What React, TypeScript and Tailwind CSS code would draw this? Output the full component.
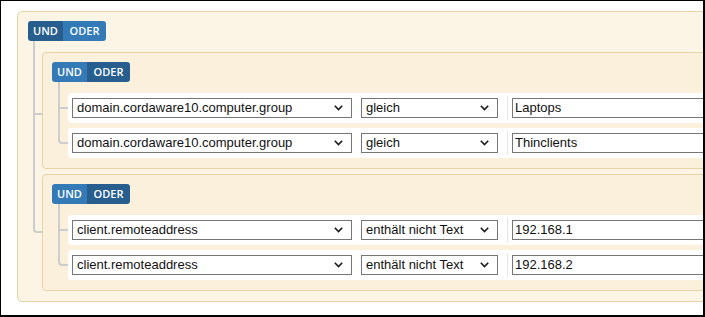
import type { ReactNode } from "react";

type Mode = "und" | "oder";

function Toggle({ active }: { active: Mode }) {
  return (
    <div className="flex h-[20px] w-fit overflow-hidden rounded-[3px] font-['Open_Sans',sans-serif] text-[11px] font-semibold text-white">
      <span
        className={`flex w-[35px] items-center justify-center ${
          active === "und" ? "bg-[#275e8e]" : "bg-[#337ab7]"
        }`}
      >
        UND
      </span>
      <span
        className={`flex items-center justify-center ${
          active === "oder" ? "bg-[#275e8e]" : "bg-[#337ab7]"
        } w-[43px]`}
      >
        ODER
      </span>
    </div>
  );
}

/** One child of a group, with its connector drawn on the left. */
function Branch({
  last,
  className,
  branch,
  children,
}: {
  last?: boolean;
  className: string;
  branch: string;
  children: ReactNode;
}) {
  return (
    <div className={`relative ${className}`}>
      {last ? (
        <div
          className={`absolute left-0 top-0 rounded-bl-[4px] border-b-2 border-l-2 border-[#cdcdcd] ${branch}`}
        />
      ) : (
        <>
          <div className="absolute bottom-0 left-0 top-0 w-[2px] bg-[#cdcdcd]" />
          <div className={`absolute left-0 h-[2px] bg-[#cdcdcd] ${branch}`} />
        </>
      )}
      {children}
    </div>
  );
}

function Select({ value, width }: { value: string; width: string }) {
  return (
    <div
      className={`flex h-[20px] shrink-0 items-center justify-between border border-[#767676] bg-white pl-[4px] pr-[8px] ${width}`}
    >
      <span>{value}</span>
      <svg width="9" height="6" viewBox="0 0 9 6" className="shrink-0">
        <polyline
          points="0.8,0.8 4.5,4.6 8.2,0.8"
          fill="none"
          stroke="#1a1a1a"
          strokeWidth="1.6"
        />
      </svg>
    </div>
  );
}

function Row({ field, op, value }: { field: string; op: string; value: string }) {
  return (
    <div className="flex h-[30px] w-[700px] items-center rounded-l-[4px] bg-white pl-[4px] text-[13px] text-[#111]">
      <Select value={field} width="w-[280px]" />
      <div className="w-[9px] shrink-0" />
      <Select value={op} width="w-[137px]" />
      <div className="ml-[9px] h-[24px] w-px shrink-0 bg-[#e4e4e4]" />
      <div className="ml-[4px] flex h-[20px] w-[300px] shrink-0 items-center border border-[#767676] bg-white pl-[2px]">
        {value}
      </div>
    </div>
  );
}

function InnerGroup({
  active,
  rows,
}: {
  active: Mode;
  rows: { field: string; op: string; value: string }[];
}) {
  return (
    <div className="w-[720px] rounded-l-[4px] border border-[#e6d4a6] bg-[#faf0dc] pb-[10px] pl-[9px] pt-[9px]">
      <Toggle active={active} />
      <div className="ml-[6px] flex flex-col">
        <Branch className="pl-[10px] pt-[11px]" branch="top-[25px] w-[10px]">
          <Row {...rows[0]} />
        </Branch>
        <Branch last className="pl-[10px] pt-[5px]" branch="h-[21px] w-[10px]">
          <Row {...rows[1]} />
        </Branch>
      </div>
    </div>
  );
}

export default function App() {
  return (
    <div className="h-[317px] w-[705px] overflow-hidden border-b-2 border-l border-r-2 border-t border-black bg-white pl-[16px] pt-[10px] font-['Liberation_Sans',Arial,sans-serif]">
      <div className="w-[760px] rounded-[5px] border border-[#e6d4a6] bg-[#fcf5e6] pb-[10px] pl-[10px] pt-[9px]">
        <Toggle active="und" />
        <div className="ml-[5px] flex flex-col">
          <Branch className="pl-[9px] pt-[11px]" branch="top-[72px] w-[9px]">
            <InnerGroup
              active="oder"
              rows={[
                { field: "domain.cordaware10.computer.group", op: "gleich", value: "Laptops" },
                { field: "domain.cordaware10.computer.group", op: "gleich", value: "Thinclients" },
              ]}
            />
          </Branch>
          <Branch last className="pl-[9px] pt-[5px]" branch="h-[64px] w-[9px]">
            <InnerGroup
              active="oder"
              rows={[
                { field: "client.remoteaddress", op: "enthält nicht Text", value: "192.168.1" },
                { field: "client.remoteaddress", op: "enthält nicht Text", value: "192.168.2" },
              ]}
            />
          </Branch>
        </div>
      </div>
    </div>
  );
}
